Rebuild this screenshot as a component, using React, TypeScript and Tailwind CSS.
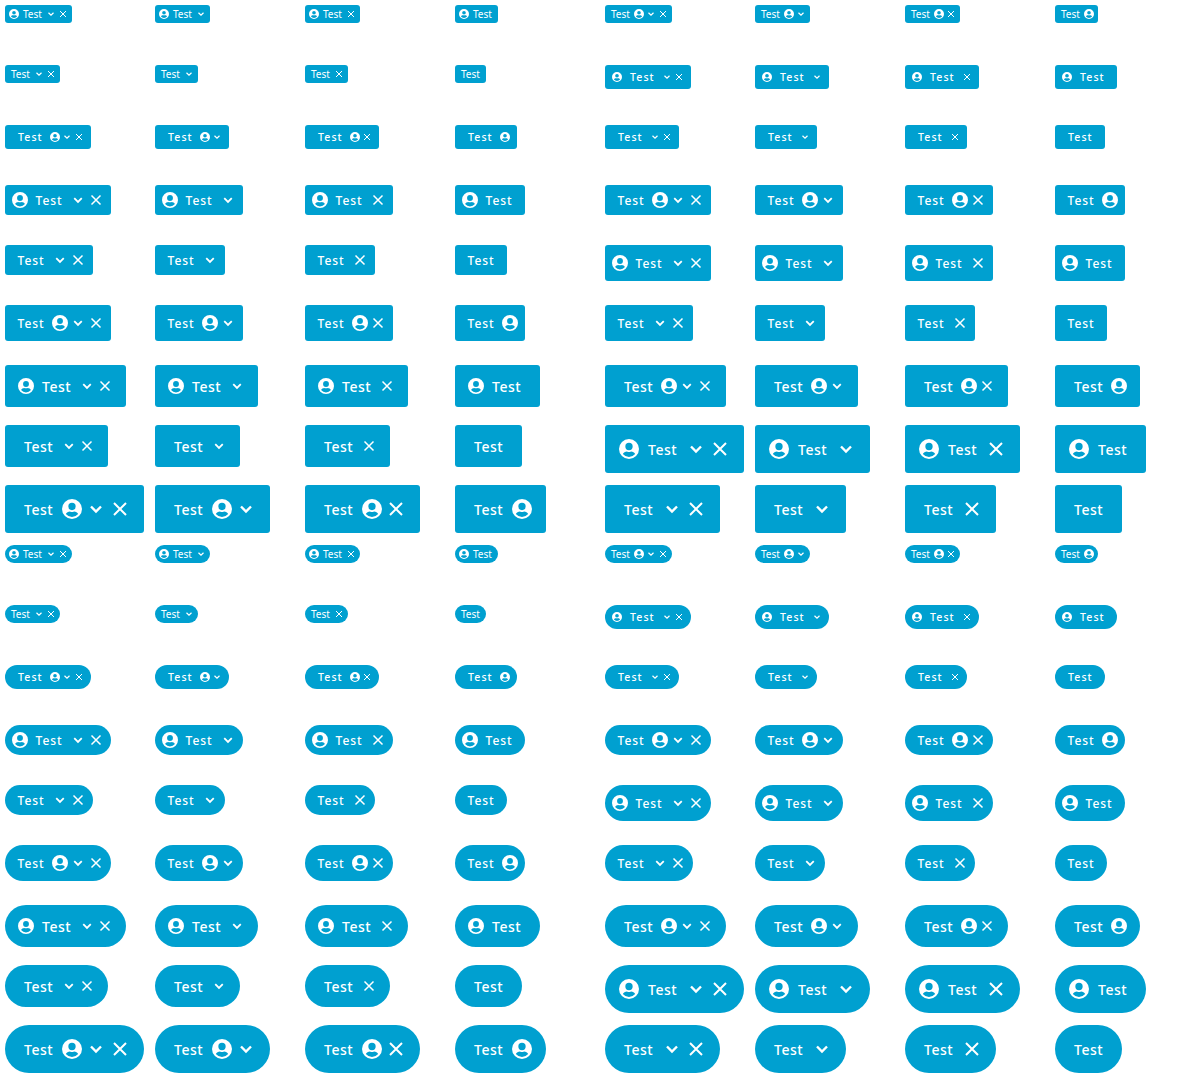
import React from "react";

type Size = "xs" | "sm" | "md" | "lg" | "xl" | "xxl";

const S: Record<Size, {
  h: string; font: string; text: string; icon: string; box: string; glyphC: string; glyphX: string;
  leadIcon: string; textStart: string; textEnd: string; trailIcon: string; trailIconEnd: string; trailIconGroup: string; groupAfterText: string; groupEnd: string;
}> = {
  xs: { h: "h-[18px]", font: "text-[10px] font-normal tracking-[0px] -mt-[1px]", text: "w-[19px]", icon: "size-[10px]", box: "size-[12px]", glyphC: "size-[12px]", glyphX: "size-[12px]", leadIcon: "ml-[4px] mr-[4px]", textStart: "ml-[6px]", textEnd: "mr-[6px]", trailIcon: "ml-[4px]", trailIconEnd: "mr-[4px]", trailIconGroup: "mr-[1px]", groupAfterText: "ml-[3px]", groupEnd: "mr-[3px]" },
  sm: { h: "h-[24px]", font: "text-[10.5px] font-medium tracking-[1.1px] pl-[1px] pt-[1px]", text: "w-[26px]", icon: "size-[10px]", box: "size-[12px]", glyphC: "size-[12px]", glyphX: "size-[12px]", leadIcon: "ml-[7px] mr-[7px]", textStart: "ml-[12px]", textEnd: "mr-[12px]", trailIcon: "ml-[7px]", trailIconEnd: "mr-[7px]", trailIconGroup: "mr-[1px]", groupAfterText: "ml-[6px]", groupEnd: "mr-[6px]" },
  md: { h: "h-[30px]", font: "text-[12px] font-medium tracking-[1px] pl-[0.5px] pt-[1px]", text: "w-[28px]", icon: "size-[16px]", box: "size-[18px]", glyphC: "size-[18px]", glyphX: "size-[18px]", leadIcon: "ml-[7px] mr-[7px]", textStart: "ml-[12px]", textEnd: "mr-[12px]", trailIcon: "ml-[7px]", trailIconEnd: "mr-[7px]", trailIconGroup: "mr-[1px]", groupAfterText: "ml-[6px]", groupEnd: "mr-[6px]" },
  lg: { h: "h-[36px]", font: "text-[12px] font-medium tracking-[1px] pl-[0.5px] pt-[1px]", text: "w-[28px]", icon: "size-[16px]", box: "size-[18px]", glyphC: "size-[18px]", glyphX: "size-[18px]", leadIcon: "ml-[7px] mr-[7px]", textStart: "ml-[12px]", textEnd: "mr-[12px]", trailIcon: "ml-[7px]", trailIconEnd: "mr-[7px]", trailIconGroup: "mr-[1px]", groupAfterText: "ml-[6px]", groupEnd: "mr-[6px]" },
  xl: { h: "h-[42px]", font: "text-[14px] font-medium tracking-[0.5px] pl-[1px] pt-[1px]", text: "w-[31px]", icon: "size-[16px]", box: "size-[18px]", glyphC: "size-[18px]", glyphX: "size-[18px]", leadIcon: "ml-[13px] mr-[7px]", textStart: "ml-[18px]", textEnd: "mr-[18px]", trailIcon: "ml-[7px]", trailIconEnd: "mr-[13px]", trailIconGroup: "mr-[1px]", groupAfterText: "ml-[6px]", groupEnd: "mr-[12px]" },
  xxl: { h: "h-[48px]", font: "text-[14px] font-medium tracking-[0.5px] pl-[1px] pt-[1px]", text: "w-[31px]", icon: "size-[20px]", box: "size-[24px]", glyphC: "size-[24px]", glyphX: "size-[24px]", leadIcon: "ml-[14px] mr-[8px]", textStart: "ml-[18px]", textEnd: "mr-[18px]", trailIcon: "ml-[8px]", trailIconEnd: "mr-[14px]", trailIconGroup: "mr-[2px]", groupAfterText: "ml-[6px]", groupEnd: "mr-[12px]" },
};

function UserIcon({ className }: { className: string }) {
  return (
    <svg viewBox="0 0 24 24" className={`${className} shrink-0`} fill="currentColor">
      <path fillRule="evenodd" d="M12 0a12 12 0 1 0 0 24 12 12 0 0 0 0-24zm0 4.6a4.4 4.4 0 1 1 0 8.8 4.4 4.4 0 0 1 0-8.8zm0 17a9.6 9.6 0 0 1-7.4-3.5c.9-1.8 2.8-3 4.9-3 .2 0 .3 0 .5.1.6.2 1.3.3 2 .3s1.4-.1 2-.3c.2-.1.3-.1.5-.1 2.100 0 4 1.200 4.900 3a9.600 9.600 0 0 1-7.400 3.500z" />
    </svg>
  );
}

function Chevron({ className }: { className: string }) {
  return (
    <svg viewBox="0 0 24 24" className={`${className} shrink-0`} fill="none" stroke="currentColor" strokeWidth="2.4">
      <path d="M7 9.500l5 5 5-5" />
    </svg>
  );
}

function Close({ className }: { className: string }) {
  return (
    <svg viewBox="0 0 24 24" className={`${className} shrink-0`} fill="none" stroke="currentColor" strokeWidth="2">
      <path d="M6 6l12 12M18 6L6 18" />
    </svg>
  );
}

function Chip({ size, mode, shape }: { size: Size; mode: string; shape: string }) {
  const s = S[size];
  const lead = mode[0] === "L";
  const trail = mode[1] === "T";
  const chev = mode[2] === "C";
  const x = mode[3] === "X";
  const group = chev || x;
  return (
    <span className={`flex w-fit items-center bg-[#00a0d0] text-white font-['Noto_Sans',sans-serif] ${s.h} ${shape}`}>
      {lead && <UserIcon className={`${s.icon} ${s.leadIcon}`} />}
      <span className={`${s.font} ${s.text} leading-none whitespace-nowrap ${lead ? "" : s.textStart} ${!trail && !group ? s.textEnd : ""}`}>Test</span>
      {trail && <UserIcon className={`${s.icon} ${s.trailIcon} ${group ? s.trailIconGroup : s.trailIconEnd}`} />}
      {group && (
        <span className={`flex items-center ${trail ? "" : s.groupAfterText} ${s.groupEnd}`}>
          {chev && <Chevron className={s.glyphC} />}
          {x && <Close className={s.glyphX} />}
        </span>
      )}
    </span>
  );
}

const suffixes = ["CX", "C-", "-X", "--"];

const rows: { left: [Size, string]; right: [Size, string] }[] = [
  { left: ["xs", "L-"], right: ["xs", "-T"] },
  { left: ["xs", "--"], right: ["sm", "L-"] },
  { left: ["sm", "-T"], right: ["sm", "--"] },
  { left: ["md", "L-"], right: ["md", "-T"] },
  { left: ["md", "--"], right: ["lg", "L-"] },
  { left: ["lg", "-T"], right: ["lg", "--"] },
  { left: ["xl", "L-"], right: ["xl", "-T"] },
  { left: ["xl", "--"], right: ["xxl", "L-"] },
  { left: ["xxl", "-T"], right: ["xxl", "--"] },
];

function Block({ shape }: { shape: string }) {
  return (
    <>
      {rows.map((r, i) => (
        <React.Fragment key={i}>
          {[r.left, r.right].map((side, j) =>
            suffixes.map((suf) => (
              <div key={`${j}${suf}`} className="h-[60px] pt-[5px] pl-[5px]">
                <Chip size={side[0]} mode={side[1] + suf} shape={shape} />
              </div>
            ))
          )}
        </React.Fragment>
      ))}
    </>
  );
}

export default function App() {
  return (
    <div className="grid grid-cols-[repeat(8,150px)] bg-white">
      <Block shape="rounded-[3px]" />
      <Block shape="rounded-full" />
    </div>
  );
}
